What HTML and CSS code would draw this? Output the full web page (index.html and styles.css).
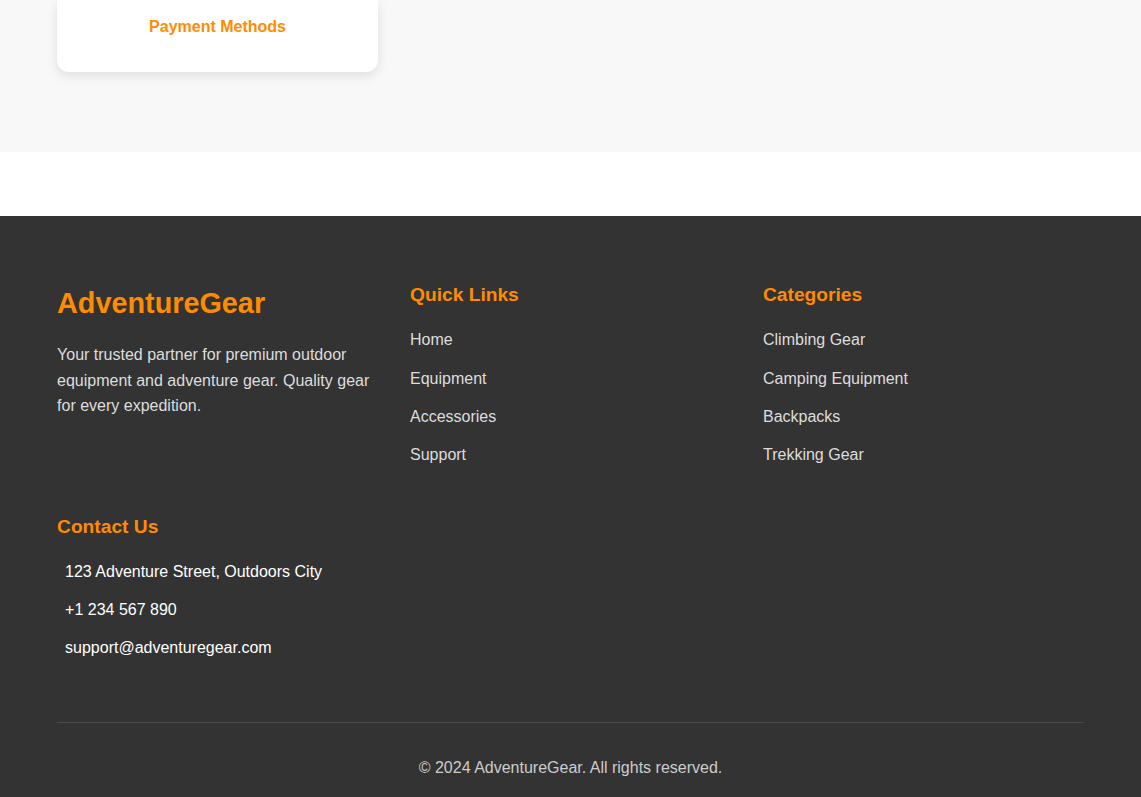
FILE: index.html
```html
<!DOCTYPE html>
<html lang="en">
<head>
<meta charset="utf-8">
<title>AdventureGear</title>
<link rel="stylesheet" href="styles.css">
</head>
<body>
<section class="features">
  <div class="feature-grid">
    <div class="feature-card">
      <h3 class="feature-title">Payment Methods</h3>
    </div>
  </div>
</section>
<div class="spacer"></div>
<footer class="site-footer">
  <div class="footer-grid">
    <div class="footer-col">
      <h2 class="brand">AdventureGear</h2>
      <p class="about">Your trusted partner for premium outdoor equipment and adventure gear. Quality gear for every expedition.</p>
    </div>
    <div class="footer-col">
      <h3 class="col-title">Quick Links</h3>
      <ul class="link-list">
        <li><a href="#">Home</a></li>
        <li><a href="#">Equipment</a></li>
        <li><a href="#">Accessories</a></li>
        <li><a href="#">Support</a></li>
      </ul>
    </div>
    <div class="footer-col">
      <h3 class="col-title">Categories</h3>
      <ul class="link-list">
        <li><a href="#">Climbing Gear</a></li>
        <li><a href="#">Camping Equipment</a></li>
        <li><a href="#">Backpacks</a></li>
        <li><a href="#">Trekking Gear</a></li>
      </ul>
    </div>
    <div class="footer-col">
      <h3 class="col-title">Contact Us</h3>
      <ul class="contact-list">
        <li><i class="contact-icon"></i>123 Adventure Street, Outdoors City</li>
        <li><i class="contact-icon"></i>+1 234 567 890</li>
        <li><i class="contact-icon"></i>support@adventuregear.com</li>
      </ul>
    </div>
  </div>
  <div class="copyright">
    <p>&copy; 2024 AdventureGear. All rights reserved.</p>
  </div>
</footer>
</body>
</html>
```

FILE: styles.css
```css
* { box-sizing: border-box; }

html, body {
  margin: 0;
  padding: 0;
}

body {
  font-family: "Liberation Sans", Arial, sans-serif;
  font-size: 16px;
  line-height: 1.6;
  color: #333;
  background: #333;
}

.features {
  background: #f8f8f8;
  padding: 0 5% 80px;
}

.feature-grid {
  display: grid;
  grid-template-columns: repeat(3, 1fr);
  gap: 32px;
}

.feature-card {
  background: #fff;
  border-radius: 0 0 12px 12px;
  box-shadow: 0 4px 12px rgba(0, 0, 0, 0.1);
  padding: 14px 20px 32px;
  text-align: center;
}

.feature-title {
  margin: 0;
  font-size: 16px;
  font-weight: bold;
  color: #ff8c00;
  line-height: 1.6;
}

.spacer {
  height: 64px;
  background: #fff;
}

.site-footer {
  background: #333;
  color: #ddd;
  padding: 64px 5% 16px;
}

.footer-grid {
  display: grid;
  grid-template-columns: repeat(3, 1fr);
  column-gap: 32px;
  row-gap: 31px;
  margin-bottom: 48px;
}

.footer-col {
  min-width: 0;
}

.brand {
  margin: 0 0 15px;
  font-size: 28.8px;
  font-weight: bold;
  line-height: 1.65;
  color: #ff8c00;
}

.about {
  margin: 0;
  color: #ddd;
}

.col-title {
  margin: 0 0 17px;
  font-size: 19.2px;
  font-weight: bold;
  line-height: 1.6;
  color: #ff8c00;
}

.link-list,
.contact-list {
  list-style: none;
  margin: 0;
  padding: 0;
}

.contact-list {
  margin-top: -1px;
}

.link-list li,
.contact-list li {
  margin-bottom: 12.8px;
}

.link-list a {
  color: #ddd;
  text-decoration: none;
}

.contact-list li {
  color: #fff;
  display: flex;
  align-items: center;
}

.contact-icon {
  display: inline-block;
  width: 0;
  margin-right: 8px;
}

.copyright {
  border-top: 1px solid #4a4a4a;
  padding-top: 32px;
  text-align: center;
  color: #ccc;
}

.copyright p {
  margin: 0;
}
```
